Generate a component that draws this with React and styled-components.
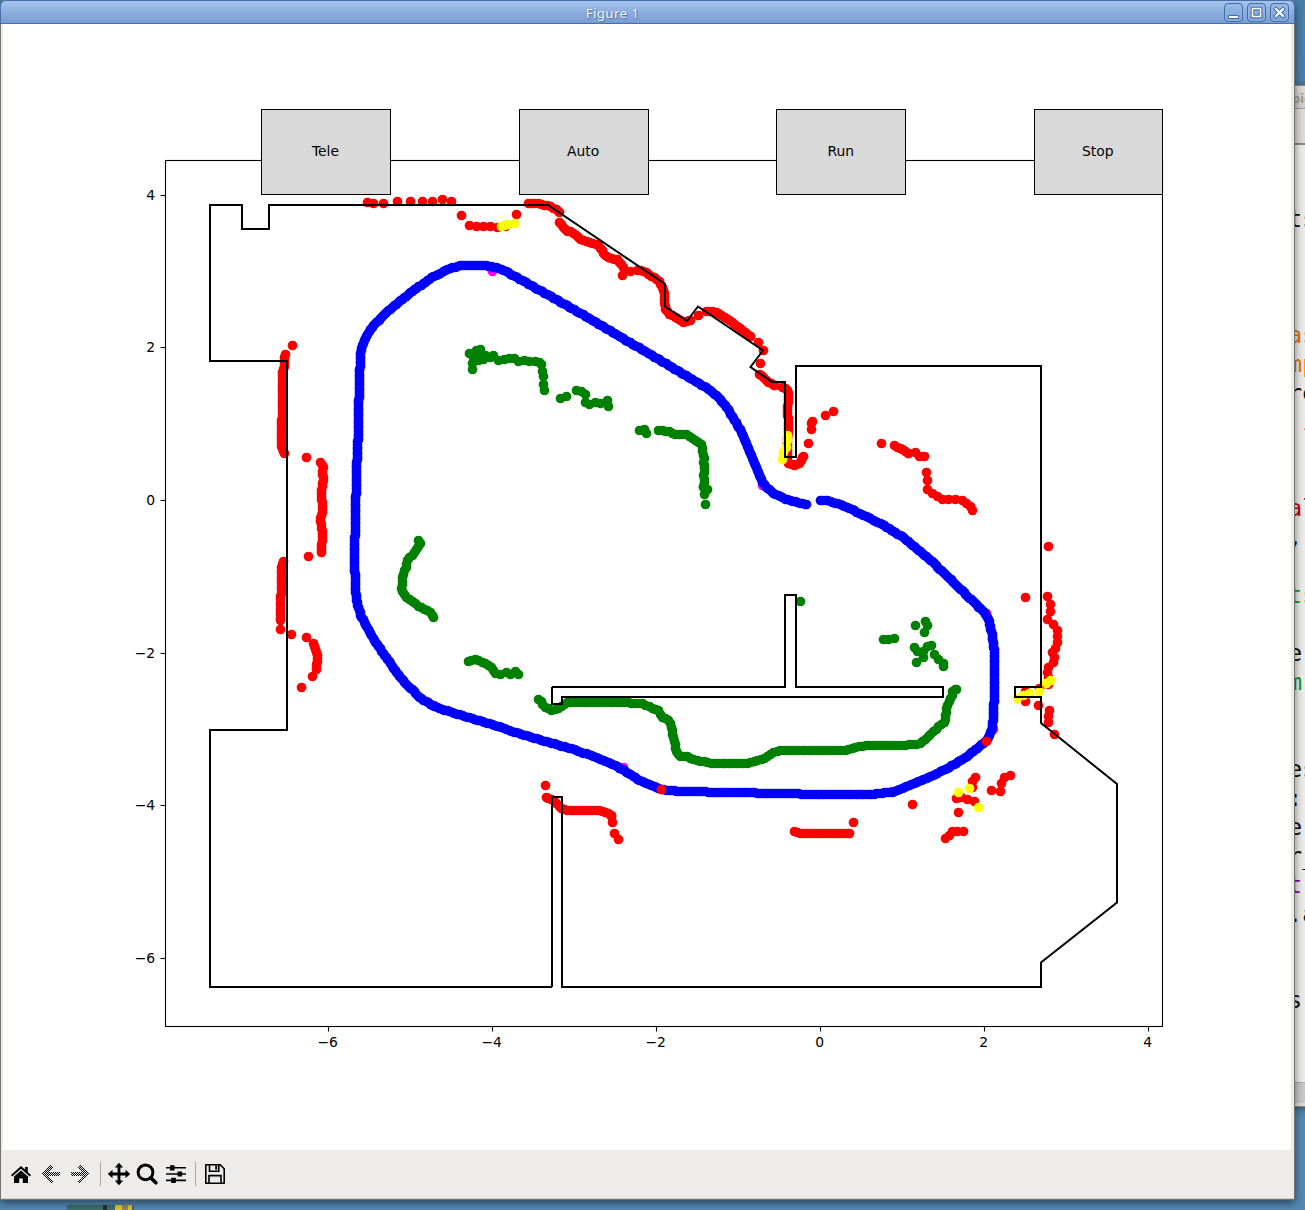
import React from "react";
import styled, { createGlobalStyle } from "styled-components";

const GlobalStyle = createGlobalStyle`
  html, body { margin: 0; padding: 0; overflow: hidden; }
  * { box-sizing: border-box; }
`;

const Desktop = styled.div`
  position: relative;
  width: 1305px;
  height: 1210px;
  overflow: hidden;
  background: linear-gradient(#4a7fa9, #5187b0 40%, #5489b4);
  font-family: "DejaVu Sans", sans-serif;
`;

const Window = styled.section`
  position: absolute;
  display: flex;
  flex-direction: column;
`;

const FigureWindow = styled(Window)`
  left: 0;
  top: 0;
  width: 1295px;
  height: 1200px;
  border: 1px solid #76736f;
  border-top: 0;
  border-radius: 6px 6px 0 0;
  background: #edeceb;
  box-shadow: 0 3px 9px rgba(0, 0, 0, 0.5);
  overflow: clip;
  overflow-clip-margin: 12px;
`;

const TitleBar = styled.header`
  display: flex;
  align-items: center;
  height: 24px;
  flex: none;
  margin: 0 -1px;
  padding: 1px 5px 0 0;
  border: 1px solid #4a6ea8;
  border-radius: 6px 6px 0 0;
  background: linear-gradient(#a5c3ec, #8fb1e0 45%, #789dd1);
`;

const Title = styled.h1`
  flex: 1;
  margin: 0;
  padding-top: 1px;
  text-align: center;
  color: #fff;
  font: 400 13.3px/20px "Noto Sans", "Open Sans", sans-serif;
  letter-spacing: 0.4px;
  text-shadow: 0 0 1px #3f629a, 1px 1px 1px #4f73ab;
`;

const Controls = styled.div`
  display: flex;
  gap: 4px;
`;

const Control = styled.button`
  width: 19px;
  height: 19px;
  padding: 0;
  border: 1px solid #426ba8;
  border-radius: 4px;
  background: linear-gradient(#9bbbe8, #789fd5);
  box-shadow: inset 0 0 0 1px #94b4e2;

  svg { display: block; }
`;

const Canvas = styled.main`
  position: relative;
  flex: 1;
  margin: 0 3px 0 2px;
  background: #fff;
`;

const Plot = styled.svg`
  display: block;
  margin-left: -3px;
  margin-top: -24px;
  overflow: visible;
`;

const ButtonOverlay = styled.div`
  position: absolute;
  left: 258px;
  top: 85px;
  display: flex;
  gap: 127.6px;
`;

const ModeButton = styled.button`
  width: ${(p) => p.$width}px;
  height: 86px;
  padding: 0 1px 2px 0;
  border: 1px solid #000;
  background: #d9d9d9;
  color: #000;
  font: 13.89px "DejaVu Sans", sans-serif;
`;

const Toolbar = styled.nav`
  display: flex;
  align-items: center;
  height: 49px;
  flex: none;
  padding-left: 6px;
  border-bottom: 1px solid #cfccc8;
`;

const Tool = styled.button`
  display: grid;
  place-items: center;
  width: ${(p) => p.$width || 29}px;
  height: 28px;
  padding: 0;
  border: 0;
  background: none;
`;

const Separator = styled.span`
  width: 1px;
  height: 24px;
  margin: 0 ${(p) => p.$right}px 0 ${(p) => p.$left}px;
  background: #a9a7a4;
`;

const EditorWindow = styled(Window)`
  left: 600px;
  top: 85px;
  width: 720px;
  height: 1022px;
  border: 1px solid #8b8985;
  background: #ececeb;
  box-shadow: 0 2px 8px rgba(0, 0, 0, 0.4);
`;

const EditorTitle = styled.div`
  height: 23px;
  padding-left: 691px;
  border-bottom: 1px solid #a5a29e;
  background: linear-gradient(#e0dedc, #cecbc8);
  color: #9b9896;
  font: 700 13px/24px "Noto Sans", sans-serif;
  white-space: nowrap;
`;

const EditorMenu = styled.div`
  height: 36px;
  border-bottom: 2px solid #898785;
  background: #dddbd9;
`;

const Code = styled.div`
  flex: 1;
  padding-top: 60px;
  padding-left: 687px;
  overflow: hidden;
`;

const CodeLine = styled.pre`
  height: 28.95px;
  margin: 0;
  color: ${(p) => p.$color};
  font: 23.5px/28.95px "DejaVu Sans Mono", monospace;
`;

const EditorStatus = styled.div`
  height: 24px;
  border-top: 1px solid #aaa;
  border-bottom: 3px solid #dedcda;
  background: #c8c8c8;
`;

const DesktopThumb = styled.div`
  position: absolute;
  left: 67px;
  top: 1205px;
  width: 65px;
  height: 8px;
  background: linear-gradient(90deg, #3c7069 0 36px, #26312f 36px 40px, #3c7069 40px 48px, #e4c52a 48px 55px, #998b58 55px 61px, #e4c52a 61px);
  box-shadow: 1px 1px 2px rgba(0, 0, 0, 0.5);
`;

const codeLines = [
  ["ts", "#111"], [""], [""], [""],
  ["as", "#e67300"], ["mp", "#e67300"], ["re", "#111"], [" i", "#c87a10"], [""], [""],
  ["al", "#cc0000"], [", ", "#123"], [""], ["ts", "#18a018"], [""],
  ["e ", "#111"], ["m ", "#0a9c10"], [""], [" '", "#c06010"], ["es", "#111"], [": ", "#111"],
  ["e ", "#111"], ["r_", "#111"], ["t ", "#8b0a9c"], [".a", "#111"], [""], [""], ["s ", "#111"],
];

const DOT_RADIUS = 4.85;

const trajectory = [[820,500],[828,501],[840,504.5],[860,513.5],[885,526],[904,538],[925,556],[931,560.5],[985,613],[989,621],[992,634],[994.5,653],[994.5,690],[993.5,718],[992,730],[986.5,741],[975,750],[966,757],[947,769],[920,781],[893,792],[870,794.5],[830,795],[800,794],[733,792.5],[680,791.5],[661.5,789.5],[647,783.5],[637,779],[622,769],[610,763.5],[587,754],[567,747.5],[540,740],[520,734],[497,726],[480,721],[460,715],[435,707],[420,697.5],[407,685],[397,673],[385,656],[373,638],[362,618],[357.5,606],[355.5,590],[354.5,557],[355.5,517],[356.5,473],[358,440],[359.5,377],[360.7,353],[363.5,342],[370,330],[387,311.5],[413,291],[433,277],[450,268.5],[461,265.5],[485,265.5],[497,268],[507,272],[533,286.5],[573,309],[607,329],[640,348.5],[673,368],[687,376.5],[707,388],[720,399],[728,409],[740,429.5],[750,452],[760,477],[765,486],[773,493],[785,499],[793,501.5],[806.5,504.5]];

const waypoints = [[492.5,271.5],[762.5,485.5],[623.5,767.5],[993.5,729.5],[986.5,613.5],[434.5,705.5],[892.5,791]];

const obstacleTrails = [
  [[528.5,203.5],[536.5,203.5],[542.5,205],[549,206],[555,209],[559.5,212.5]],
  [[559,222.5],[566,231],[572,232],[581.5,240],[590,243],[598,245],[603,251],[604,255],[611.5,259],[618,260],[622,265],[623,267]],
  [[637,270.5],[642,270.5],[650,275],[658.5,281],[662.5,287],[664,293],[664.5,303],[666,310],[669,314],[675,317],[683.5,322.5],[690,320.5]],
  [[706.5,311.5],[711.5,311.5],[716.5,312.5],[727,319],[740,328],[750.5,336.5]],
  [[759,374],[764,378],[768.5,382],[774.5,385.5]],
  [[782.5,387],[788.5,391],[788.5,400],[787.5,410],[788.5,425],[787.5,445],[787.5,463],[794.5,466],[800,463],[803.5,456.5]],
  [[285.5,354],[284,361],[284.5,368],[282.5,372],[283,400],[282,420],[281,445.5],[284.5,453.5]],
  [[320.5,462.5],[323.5,467],[322.5,473],[323.5,478],[321.5,490],[322.5,510],[320.5,520],[322.5,535],[321.5,552.5]],
  [[283.5,561.5],[281,570],[281.5,585],[280.5,605],[280.5,620]],
  [[313.5,643],[317,653],[317.5,660],[316.5,669]],
  [[894.5,445.5],[899,448],[905,451],[908.5,453.5]],
  [[546,797.5],[552,800],[557,804],[562,809],[570,811],[580,810.5],[600,811],[607,813],[611.5,816]],
  [[794.5,831.5],[803.5,834],[812.5,833.5],[840,834],[849.5,833.5]],
];

const obstacleDots = [[367.5,202.5],[373.5,203.5],[383.5,203.5],[397.5,201.5],[410.5,201.5],[422.5,201.5],[432.5,201.5],[442.5,199.5],[451.5,201.5],[461.5,215.5],[469.5,225.5],[476.5,226.5],[483.5,226.5],[490.5,226.5],[497.5,227.5],[505.5,226.5],[516.5,214.5],[622.5,275.5],[630.5,271.5],[698.5,315.5],[758.5,342.5],[763.5,350.5],[760.5,363.5],[808.5,443.5],[811.5,429.5],[811.5,423.5],[812.5,421.5],[825.5,415.5],[833.5,411.5],[292.5,345.5],[306.5,457.5],[308.5,556.5],[280.5,629.5],[291.5,634.5],[306.5,637.5],[312.5,676.5],[301.5,687.5],[881.5,443.5],[915.5,452.5],[919.5,456.5],[924.5,456.5],[926.5,472.5],[927.5,480.5],[927.5,489.5],[932.5,493.5],[937.5,496.5],[942.5,499.5],[948.5,499.5],[955.5,499.5],[962.5,500.5],[966.5,503.5],[970.5,506.5],[972.5,510.5],[1048.5,546.5],[1025.5,597.5],[1047.5,596.5],[1050.5,604.5],[1050.5,611.5],[1047.5,619.5],[1053.5,624.5],[1057.5,630.5],[1057.5,636.5],[1057.5,642.5],[1055.5,648.5],[1052.5,652.5],[1054.5,657.5],[1053.5,662.5],[1048.5,667.5],[1047.5,672.5],[1048.5,677.5],[1048.5,684.5],[1039.5,688.5],[1025.5,691.5],[1025.5,701.5],[1038.5,705.5],[1049.5,710.5],[1048.5,716.5],[1048.5,722.5],[1054.5,734.5],[912.5,804.5],[975.5,777.5],[972.5,781.5],[972.5,787.5],[956.5,798.5],[961.5,797.5],[967.5,799.5],[974.5,801.5],[958.5,812.5],[991.5,790.5],[1000.5,791.5],[1001.5,783.5],[1004.5,777.5],[1010.5,775.5],[945.5,838.5],[949.5,835.5],[952.5,831.5],[957.5,831.5],[963.5,831.5],[545.5,785.5],[612.5,822.5],[614.5,833.5],[618.5,839.5],[853.5,822.5],[661.5,789.5],[986.5,741.5]];

const innerTrails = [
  [[658.5,430.5],[668.5,431.5],[672.5,434],[678.5,434],[685,434],[693.5,438.5],[701,444],[702.5,450],[704.5,457],[703.5,463],[705.5,466],[703.5,475],[704.5,482],[703.5,487]],
  [[418.5,540.5],[420.5,544.5],[413,554],[407.5,560],[406.5,567],[403,575],[402,585],[401,590],[406.5,597],[418,606],[432,613],[433.5,617.5]],
  [[468.5,661.5],[473.5,659.5],[479,660.5],[490,666],[495.5,673]],
  [[538.5,699.5],[541.5,702],[544,707],[548.5,709],[553.5,710.5],[560,708.5],[565,703],[580,702],[603.5,702],[643,703.5],[653,709],[659,711],[662.5,717],[668,720],[671.5,725],[673,735],[675,743],[675.5,750],[679.5,757],[688.5,756],[691.5,759],[703,761.5],[713,763.5],[746.5,763.5],[763,759],[778,750.5],[808.5,750],[845,750.5],[857,746.5],[870,745.5],[893,746],[920,744],[933,732],[945.5,721],[945.5,714],[948,705],[952,696],[953,691],[956.5,689.5]],
];

const innerDots = [[469.5,353.5],[476.5,350.5],[480.5,349.5],[472.5,369.5],[472.5,363.5],[473.5,357.5],[478.5,355.5],[478.5,360.5],[483.5,359.5],[485.5,355.5],[493.5,355.5],[490.5,357.5],[498.5,360.5],[504.5,359.5],[509.5,358.5],[514.5,358.5],[518.5,361.5],[524.5,360.5],[529.5,361.5],[535.5,361.5],[539.5,362.5],[541.5,364.5],[542.5,371.5],[543.5,376.5],[543.5,384.5],[544.5,390.5],[560.5,398.5],[566.5,396.5],[576.5,390.5],[581.5,391.5],[585.5,394.5],[585.5,402.5],[589.5,404.5],[595.5,402.5],[600.5,403.5],[607.5,400.5],[608.5,406.5],[639.5,430.5],[644.5,429.5],[646.5,433.5],[707.5,489.5],[704.5,494.5],[705.5,504.5],[500.5,674.5],[506.5,672.5],[510.5,674.5],[515.5,671.5],[518.5,674.5],[800.5,601.5],[883.5,639.5],[888.5,639.5],[894.5,638.5],[915.5,625.5],[925.5,621.5],[927.5,625.5],[924.5,632.5],[914.5,647.5],[917.5,651.5],[916.5,662.5],[923.5,657.5],[923.5,651.5],[927.5,646.5],[931.5,645.5],[934.5,654.5],[938.5,659.5],[943.5,663.5],[943.5,666.5]];

const coneDots = [[501.5,226.5],[504.5,225.5],[507.5,224.5],[514.5,223.5],[787.5,435.5],[787.5,440.5],[786.5,447.5],[783.5,452.5],[782.5,459.5],[1050.5,680.5],[1046.5,683.5],[1039.5,691.5],[1029.5,693.5],[1023.5,695.5],[1017.5,698.5],[969.5,788.5],[958.5,792.5],[978.5,807.5]];

const outerWall = "552,987 210,987 210,730 287,730 287,361 210,361 210,205 242,205 242,229 269,229 269,205 548,205 665,284 665,306.5 687,321 698,306.5 763,350.5 750.5,367 772,382 785,382 785,457 796,457 796,366 1041,366 1041,687 1015,687 1015,697 1041,697 1041,723 1117,784 1117,902.5 1041,962.5 1041,987 562,987 562,797 552,797 552,987";
const innerWall = "552,687 785,687 785,595 796,595 796,687 943,687 943,697 562,697 562,704 552,704 552,687";

const xTicks = [[328, "−6"], [492, "−4"], [656, "−2"], [820, "0"], [984, "2"], [1148, "4"]];
const yTicks = [[195, "4"], [347, "2"], [500, "0"], [653, "−2"], [805, "−4"], [958, "−6"]];

const snap = (v) => Math.floor(v) + 0.5;

function sampleTrail(points, spacing) {
  const out = [points[0]];
  let carry = 0;
  for (let i = 1; i < points.length; i++) {
    const [x0, y0] = points[i - 1];
    const [x1, y1] = points[i];
    const length = Math.hypot(x1 - x0, y1 - y0);
    let d = spacing - carry;
    while (d <= length) {
      out.push([x0 + ((x1 - x0) * d) / length, y0 + ((y1 - y0) * d) / length]);
      d += spacing;
    }
    carry = length - (d - spacing);
  }
  out.push(points[points.length - 1]);
  return out;
}

function Dots({ points, color }) {
  return (
    <g fill={color}>
      {points.map(([x, y], i) => (
        <circle key={i} cx={snap(x)} cy={snap(y)} r={DOT_RADIUS} />
      ))}
    </g>
  );
}

function Trails({ trails, color, spacing }) {
  return trails.map((t, i) => <Dots key={i} points={sampleTrail(t, spacing)} color={color} />);
}

function MapPlot() {
  return (
    <Plot width="1288" height="1140" viewBox="0 0 1288 1140">
      <rect x="165.5" y="160.5" width="997" height="866" fill="none" stroke="#000" strokeWidth="1.1" />
      <g stroke="#000" strokeWidth="1.1">
        {xTicks.map(([x]) => <line key={x} x1={x + 0.5} x2={x + 0.5} y1="1026.5" y2="1031.5" />)}
        {yTicks.map(([y]) => <line key={y} x1="160.5" x2="165.5" y1={y + 0.5} y2={y + 0.5} />)}
      </g>
      <g fontFamily="DejaVu Sans, sans-serif" fontSize="13.89">
        {xTicks.map(([x, t]) => <text key={t} x={x - 0.3} y="1047" textAnchor="middle">{t}</text>)}
        {yTicks.map(([y, t]) => <text key={t} x="155.2" y={y + 5} textAnchor="end">{t}</text>)}
      </g>
      <Dots points={waypoints} color="#ff00ff" />
      <Dots points={sampleTrail(trajectory, 2.6)} color="#0000ff" />
      <Trails trails={obstacleTrails} color="#ff0000" spacing={3.2} />
      <Dots points={obstacleDots} color="#ff0000" />
      <Trails trails={innerTrails} color="#008000" spacing={3.6} />
      <Dots points={innerDots} color="#008000" />
      <Dots points={coneDots} color="#ffff00" />
      <g fill="none" stroke="#000" strokeWidth="2">
        <polyline points={outerWall} />
        <polyline points={innerWall} />
      </g>
    </Plot>
  );
}

const HomeIcon = () => (
  <svg width="22" height="22" viewBox="0 0 22 22">
    <path d="M11 3 1 12l1.2 1.4L11 5.8l8.8 7.6L21 12l-3.2-2.9V4H15v2.6z" />
    <path d="M11 7.5 4 13.5V20h5.2v-4.6h3.6V20H18v-6.5z" />
  </svg>
);

const ArrowIcon = ({ flip }) => (
  <svg width="22" height="22" viewBox="0 0 22 22" shapeRendering="crispEdges">
    <defs>
      <pattern id="stipple" width="2" height="2" patternUnits="userSpaceOnUse">
        <path d="M0 0h1v1H0zM1 1h1v1H1z" fill="#000" />
      </pattern>
    </defs>
    <path
      fill="url(#stipple)"
      transform={flip ? "translate(22 0) scale(-1 1)" : undefined}
      d="M1.5 11 11 1.5l2.5 2.5L8 9.3h12v3.4H8l5.5 5.3-2.5 2.5z"
    />
  </svg>
);

const MoveIcon = () => (
  <svg width="24" height="24" viewBox="0 0 24 24">
    <path d="M12 .8 16.2 5.5H13.4V10.6H18.5V7.8L23.2 12l-4.7 4.2v-2.8h-5.1v5.1h2.8L12 23.2l-4.2-4.7h2.8v-5.1H5.5v2.8L.8 12l4.7-4.2v2.8h5.1V5.5H7.8z" />
  </svg>
);

const ZoomIcon = () => (
  <svg width="22" height="22" viewBox="0 0 22 22" fill="none" stroke="#000">
    <circle cx="9.5" cy="9.3" r="7.4" strokeWidth="3" />
    <path d="m14.8 14.8 5 5" strokeWidth="3.6" strokeLinecap="round" />
  </svg>
);

const SlidersIcon = () => (
  <svg width="20" height="20" viewBox="0 0 20 20">
    <path d="M0 3h20v1.6H0zM0 9.2h20v1.6H0zM0 15.6h20v1.6H0zM4 1.2h4.6v5.2H4zM11.5 7.4h4.6v5.2h-4.6zM5.2 13.8h4.6V19H5.2z" />
  </svg>
);

const SaveIcon = () => (
  <svg width="20" height="20" viewBox="0 0 20 20" fill="none" stroke="#000" strokeWidth="1.6">
    <path d="M.8.8h14.4l4 4v14.4H.8z" strokeLinejoin="round" />
    <path d="M4.5 1v6.2h9.3V1M4 19v-7.4h12V19" />
    <path d="M10.2 1.6h2v4h-2z" fill="#000" stroke="none" />
  </svg>
);

const MinimizeIcon = () => (
  <svg width="17" height="17" viewBox="0 0 17 17"><path d="M3.5 11.5h10v3h-10z" fill="#fff" stroke="#426ba8" /></svg>
);
const MaximizeIcon = () => (
  <svg width="17" height="17" viewBox="0 0 17 17" fill="none">
    <path d="M4.5 4.5h8v8h-8z" stroke="#426ba8" strokeWidth="3.6" />
    <path d="M4.5 4.5h8v8h-8z" stroke="#fff" strokeWidth="1.6" />
  </svg>
);
const CloseIcon = () => (
  <svg width="17" height="17" viewBox="0 0 17 17" fill="none" strokeLinecap="square">
    <path d="m5 5 7 7m0-7-7 7" stroke="#426ba8" strokeWidth="4" />
    <path d="m5 5 7 7m0-7-7 7" stroke="#fff" strokeWidth="2.2" />
  </svg>
);

const modes = [["Tele", 130], ["Auto", 130], ["Run", 130], ["Stop", 129]];

export default function App() {
  return (
    <Desktop>
      <GlobalStyle />
      <DesktopThumb />
      <EditorWindow>
        <EditorTitle>pic</EditorTitle>
        <EditorMenu />
        <Code>
          {codeLines.map(([text, color], i) => <CodeLine key={i} $color={color}>{text}</CodeLine>)}
        </Code>
        <EditorStatus />
      </EditorWindow>
      <FigureWindow>
        <TitleBar>
          <Title>Figure 1</Title>
          <Controls>
            <Control aria-label="Minimize"><MinimizeIcon /></Control>
            <Control aria-label="Maximize"><MaximizeIcon /></Control>
            <Control aria-label="Close"><CloseIcon /></Control>
          </Controls>
        </TitleBar>
        <Canvas>
          <MapPlot />
          <ButtonOverlay>
            {modes.map(([label, width]) => <ModeButton key={label} $width={width}>{label}</ModeButton>)}
          </ButtonOverlay>
        </Canvas>
        <Toolbar>
          <Tool $width={27} aria-label="Home"><HomeIcon /></Tool>
          <Tool $width={33} aria-label="Back"><ArrowIcon /></Tool>
          <Tool $width={26} aria-label="Forward"><ArrowIcon flip /></Tool>
          <Separator $left={7} $right={3} />
          <Tool aria-label="Pan"><MoveIcon /></Tool>
          <Tool $width={28} aria-label="Zoom"><ZoomIcon /></Tool>
          <Tool aria-label="Configure subplots"><SlidersIcon /></Tool>
          <Separator $left={5} $right={4} />
          <Tool aria-label="Save"><SaveIcon /></Tool>
        </Toolbar>
      </FigureWindow>
    </Desktop>
  );
}
